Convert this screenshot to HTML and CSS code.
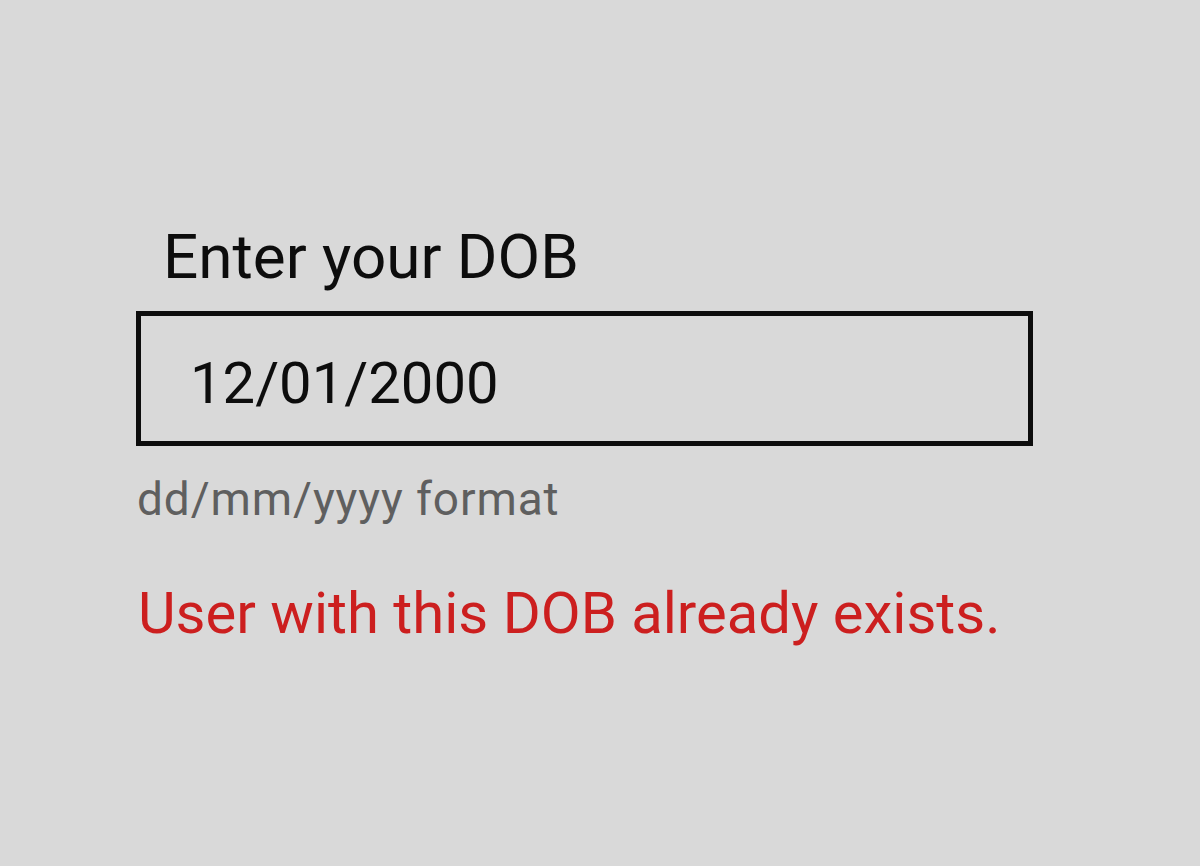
FILE: index.html
```html
<!DOCTYPE html>
<html lang="en">
<head>
<meta charset="utf-8">
<title>Enter your DOB</title>
<link rel="stylesheet" href="styles.css">
</head>
<body>
<main class="page">
  <form class="field">
    <label class="field-label" for="dob">Enter your DOB</label>
    <div class="field-box">
      <input class="field-input" id="dob" type="text" value="12/01/2000">
    </div>
    <p class="field-hint">dd/mm/yyyy format</p>
    <p class="field-error">User with this DOB already exists.</p>
  </form>
</main>
</body>
</html>
```

FILE: styles.css
```css
html, body {
  margin: 0;
  padding: 0;
  background: #d9d9d9;
}
body {
  font-family: Roboto, "Liberation Sans", sans-serif;
  color: #111;
}
.page {
  width: 1200px;
  height: 866px;
  box-sizing: border-box;
  padding: 222px 0 0 136px;
}
.field {
  display: flex;
  flex-direction: column;
  width: 897px;
  margin: 0;
}
.field-label {
  font-size: 62px;
  line-height: 70px;
  padding-left: 27px;
  color: #0d0d0d;
  margin-bottom: 19px;
}
.field-box {
  box-sizing: border-box;
  height: 135px;
  border: 5px solid #0d0d0d;
  display: flex;
  align-items: center;
  padding: 8px 0 0 49px;
}
.field-input {
  border: 0;
  outline: 0;
  background: transparent;
  font-family: Roboto, "Liberation Sans", sans-serif;
  font-size: 58px;
  color: #0d0d0d;
  padding: 0;
  margin: 0;
  width: 100%;
}
.field-hint {
  margin: 28px 0 0 1px;
  font-size: 46px;
  line-height: 50px;
  letter-spacing: 0.9px;
  color: #5f5f5f;
}
.field-error {
  margin: 56px 0 0 2px;
  font-size: 58px;
  line-height: 66px;
  color: #cc1f1f;
}
```
